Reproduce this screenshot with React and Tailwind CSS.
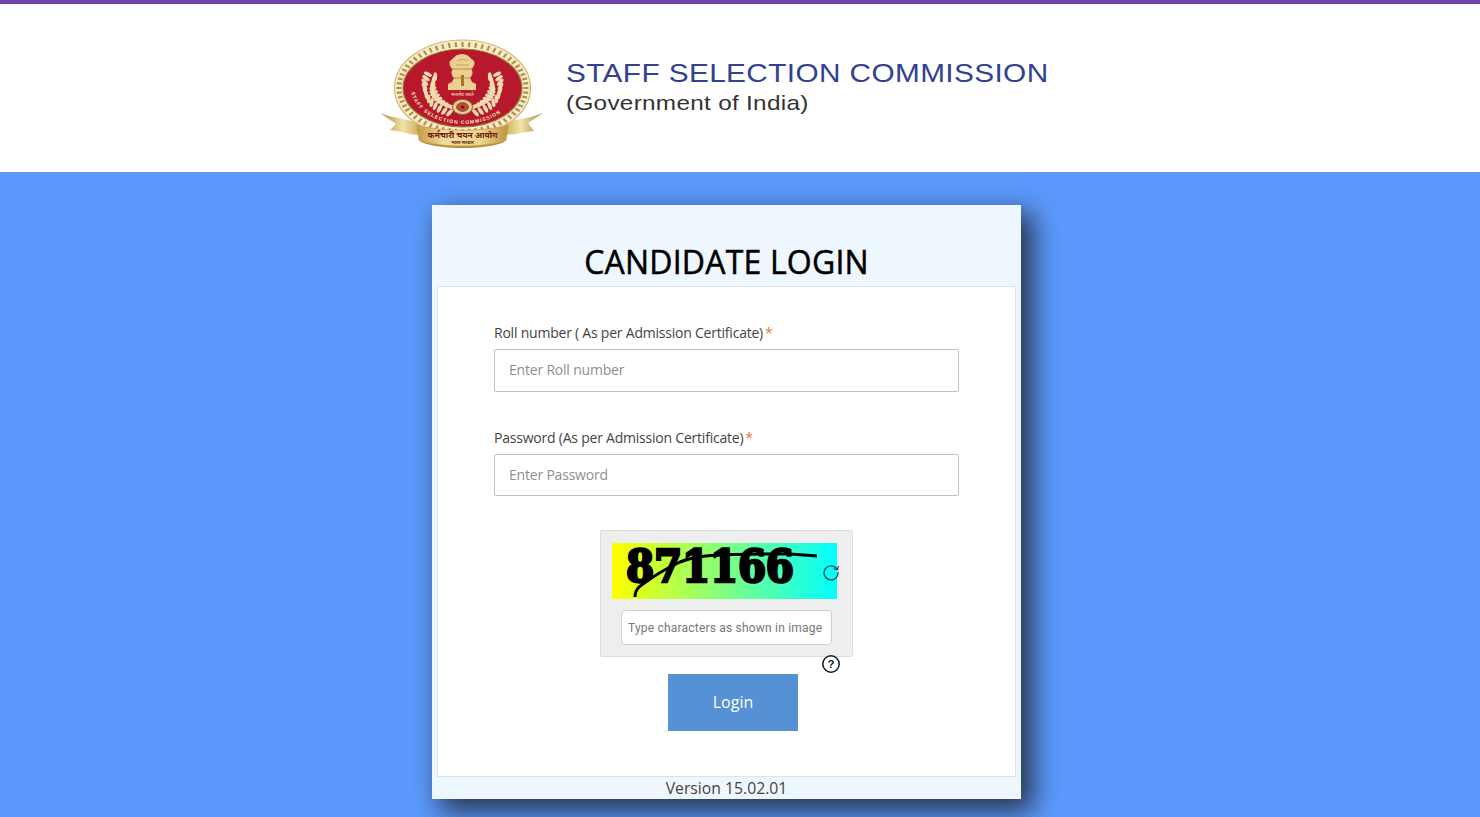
import React from "react";

function Emblem() {
  const leaves = [];
  for (let i = 0; i < 12; i++) {
    const th = ((20 + i * 8.6) * Math.PI) / 180;
    [30, 38].forEach((R, row) => {
      [-1, 1].forEach((side) => {
        const x = side * Math.sin(th) * R;
        const y = Math.cos(th) * R * 0.75 - 2;
        const tang = (Math.atan2(-Math.sin(th) * 0.75, -side * Math.cos(th)) * 180) / Math.PI;
        leaves.push({ x, y, r: tang + side * (row === 0 ? -32 : 32) });
      });
    });
  }
  const ticks = [];
  for (let a = 0; a < 360; a += 6) ticks.push(a);
  return (
    <svg width="170" height="112" viewBox="0 0 170 112" className="shrink-0">
      <defs>
        <linearGradient id="gold" x1="0" y1="0" x2="1" y2="0">
          <stop offset="0" stopColor="#c39a45" />
          <stop offset="0.3" stopColor="#f1dd9b" />
          <stop offset="0.7" stopColor="#ecd58d" />
          <stop offset="1" stopColor="#bf9440" />
        </linearGradient>
        <linearGradient id="ribL" x1="0" y1="0" x2="1" y2="0">
          <stop offset="0" stopColor="#a98a45" />
          <stop offset="0.6" stopColor="#f2e3a8" />
          <stop offset="1" stopColor="#d3b25f" />
        </linearGradient>
        <linearGradient id="ribR" x1="1" y1="0" x2="0" y2="0">
          <stop offset="0" stopColor="#a98a45" />
          <stop offset="0.6" stopColor="#f2e3a8" />
          <stop offset="1" stopColor="#d3b25f" />
        </linearGradient>
        <path id="arcBottom" d="M 33 52 A 52 36 0 0 0 137 52" fill="none" />
      </defs>
      <g transform="translate(84.5 52)">
        <ellipse cx="0" cy="0" rx="68" ry="48" fill="#f6ecc9" stroke="#d3b671" strokeWidth="1.2" />
        {ticks.map((a) => (
          <line
            key={a}
            x1={Math.cos((a * Math.PI) / 180) * 61}
            y1={Math.sin((a * Math.PI) / 180) * 41}
            x2={Math.cos((a * Math.PI) / 180) * 66}
            y2={Math.sin((a * Math.PI) / 180) * 46}
            stroke="#b2924a"
            strokeWidth="2.2"
          />
        ))}
        <ellipse cx="0" cy="0" rx="59.5" ry="39" fill="#b8182b" stroke="#9a7f3b" strokeWidth="1.2" />
        {leaves.map((l, i) => (
          <ellipse key={i} cx={l.x} cy={l.y} rx="4.4" ry="1.9" fill="#efdcae" transform={`rotate(${l.r} ${l.x} ${l.y})`} />
        ))}
      </g>
      <path
        d="M84 18 C 78 18 76 22 73 24 C 70 26 72 32 75 33 C 72 36 74 40 76 42 L 74 46 L 70 48 L 70 54 L 98 54 L 98 48 L 94 46 L 92 42 C 94 40 96 36 93 33 C 96 32 98 26 95 24 C 92 22 90 18 84 18 Z"
        fill="#eccf92"
      />
      <path d="M75 33 H93 M76 42 H92" stroke="#b8862e" strokeWidth="0.9" />
      <path d="M79 25 C 82 23 87 23 90 25 M78 29 H91" stroke="#c89a45" strokeWidth="0.8" fill="none" />
      <rect x="83" y="39" width="3" height="11" fill="#a8742a" />
      <text x="84.5" y="60" textAnchor="middle" fontSize="4.6" fill="#f6e9c4" fontFamily="'Noto Sans', 'DejaVu Sans', sans-serif">सत्यमेव जयते</text>
      <ellipse cx="84.5" cy="71" rx="10" ry="7.5" fill="#e6cf95" stroke="#8a6a2a" strokeWidth="1" />
      <ellipse cx="84.5" cy="71" rx="6" ry="4.4" fill="#c04a3a" stroke="#7a4a20" strokeWidth="0.8" />
      <ellipse cx="84.5" cy="71" rx="2" ry="1.6" fill="#7f1020" />
      <text fontSize="5" fontWeight="700" fill="#f6e9c4" letterSpacing="1" fontFamily="'Liberation Sans', sans-serif">
        <textPath href="#arcBottom" startOffset="3%">STAFF SELECTION COMMISSION</textPath>
      </text>
      <path d="M2 77 C 14 82 26 82 40 87 L 40 99 C 30 98 20 95 12 94 L 18 88 Z" fill="url(#ribL)" />
      <path d="M165 77 C 154 82 142 82 128 87 L 128 99 C 138 98 148 96 156 95 L 150 87 Z" fill="url(#ribR)" />
      <path d="M39 89 C 62 96 107 96 130 89 L 128 104 C 108 112 62 112 41 104 Z" fill="url(#gold)" stroke="#c09a4c" strokeWidth="0.7" />
      <path d="M41 104 C 62 112 108 112 128 104 L 126 106 C 108 114 62 114 43 106 Z" fill="#b98f3e" />
      <text x="84.5" y="101.5" textAnchor="middle" fontSize="8.4" fontWeight="700" fill="#6d1d16" fontFamily="'Noto Sans', 'DejaVu Sans', sans-serif">कर्मचारी चयन आयोग</text>
      <text x="84.5" y="108" textAnchor="middle" fontSize="4.4" fontWeight="700" fill="#6d1d16" fontFamily="'Noto Sans', 'DejaVu Sans', sans-serif">भारत सरकार</text>
    </svg>
  );
}

function Field({ label, placeholder, className, inputClass }) {
  return (
    <div className={className}>
      <label className="block text-[14px] leading-[20px] tracking-[-0.22px] text-[#444]">
        {label}
        <span className="ml-[2px] text-[#e8762c]">*</span>
      </label>
      <input
        placeholder={placeholder}
        className={`mt-[6px] block w-full rounded-[2px] border border-[#c2c2c2] bg-white px-[14px] pb-[2px] text-[14px] tracking-[-0.2px] text-[#444] outline-none placeholder:text-[#8f8f8f] ${inputClass}`}
      />
    </div>
  );
}

export default function App() {
  return (
    <div className="h-[817px] overflow-hidden bg-[#5b9afc] font-['Open_Sans','Liberation_Sans',sans-serif]">
      <header className="flex h-[172px] items-start border-t-[4px] border-[#6d45a8] bg-white">
        <div className="ml-[378px] mt-[32px] flex">
          <Emblem />
          <div className="ml-[18px] mt-[22px] font-['Liberation_Sans',Arial,sans-serif]">
            <div className="origin-left scale-x-[1.123] whitespace-nowrap text-[26.5px] leading-[30px] tracking-[0.35px] text-[#33418f]">STAFF SELECTION COMMISSION</div>
            <div className="mt-[2px] origin-left scale-x-[1.158] whitespace-nowrap text-[21px] leading-[26px] tracking-[0.25px] text-[#333]">(Government of India)</div>
          </div>
        </div>
      </header>

      <main className="ml-[432px] mt-[33px] flex h-[594px] w-[589px] flex-col bg-[#eef6fe] px-[5px] shadow-[10px_10px_25px_2px_rgba(30,35,45,0.85)]">
        <h1 className="h-[81px] pt-[37px] text-center text-[32px] font-normal leading-[40px] tracking-[0.2px] text-black [-webkit-text-stroke:0.5px_black]">CANDIDATE LOGIN</h1>
        <section className="h-[491px] border border-[#dde3ea] bg-white px-[56px] pt-[36px]">
          <Field label="Roll number ( As per Admission Certificate)" placeholder="Enter Roll number" inputClass="h-[43px]" />
          <Field label="Password (As per Admission Certificate)" placeholder="Enter Password" className="mt-[36px]" inputClass="h-[42px]" />

          <div className="relative mx-auto mt-[34px] h-[127px] w-[253px] rounded-[2px] border border-[#dedede] bg-[#eeeeee] pl-[11px] pt-[12px]">
            <div className="relative h-[56px] w-[225px] bg-[linear-gradient(90deg,#ffff00,#00ffff)]">
              <span className="absolute left-[14px] top-0 font-['DejaVu_Serif_Condensed','DejaVu_Serif',serif] text-[45px] font-bold leading-[48px] tracking-[-0.2px] text-black [-webkit-text-stroke:2.5px_black]">871166</span>
              <svg className="absolute inset-0" width="225" height="56" viewBox="0 0 225 56">
                <path d="M23 54 C 23 49 24 47 27 44 C 40 34 55 25 68 19 C 80 14 95 12 111 12 C 135 11 160 11 178 11 L 205 13" fill="none" stroke="#000" strokeWidth="3" />
              </svg>
            </div>
            <svg className="absolute left-[221px] top-[32px]" width="18" height="18" viewBox="0 0 18 18" fill="none" stroke="#0d4a55" strokeWidth="1.3">
              <path d="M15.2 6.5 A 7 7 0 1 0 16 9" />
              <path d="M11.5 5.8 L15.6 6.9 L16.4 2.8" strokeWidth="1.1" />
            </svg>
            <input
              placeholder="Type characters as shown in image"
              className="ml-[9px] mt-[11px] block h-[35px] w-[211px] rounded-[4px] border border-[#cfcfcf] bg-white px-[6px] font-['Roboto','Liberation_Sans',sans-serif] text-[12px] tracking-[0.2px] outline-none placeholder:text-[#777]"
            />
            <svg className="absolute left-[220px] top-[123px]" width="20" height="20" viewBox="0 0 20 20" fill="none">
              <circle cx="10" cy="10" r="8.2" stroke="#0c1f26" strokeWidth="1.5" />
              <text x="10" y="14" textAnchor="middle" fontSize="11.5" fontWeight="700" fill="#0c1f26" fontFamily="'Liberation Sans', sans-serif">?</text>
            </svg>
          </div>

          <button className="ml-[174px] mt-[17px] block h-[57px] w-[130px] bg-[#5691d5] pb-[2px] text-[16px] font-medium text-white">Login</button>
        </section>
        <div className="text-center text-[15.75px] leading-[22px] text-[#444]">Version 15.02.01</div>
      </main>
    </div>
  );
}
